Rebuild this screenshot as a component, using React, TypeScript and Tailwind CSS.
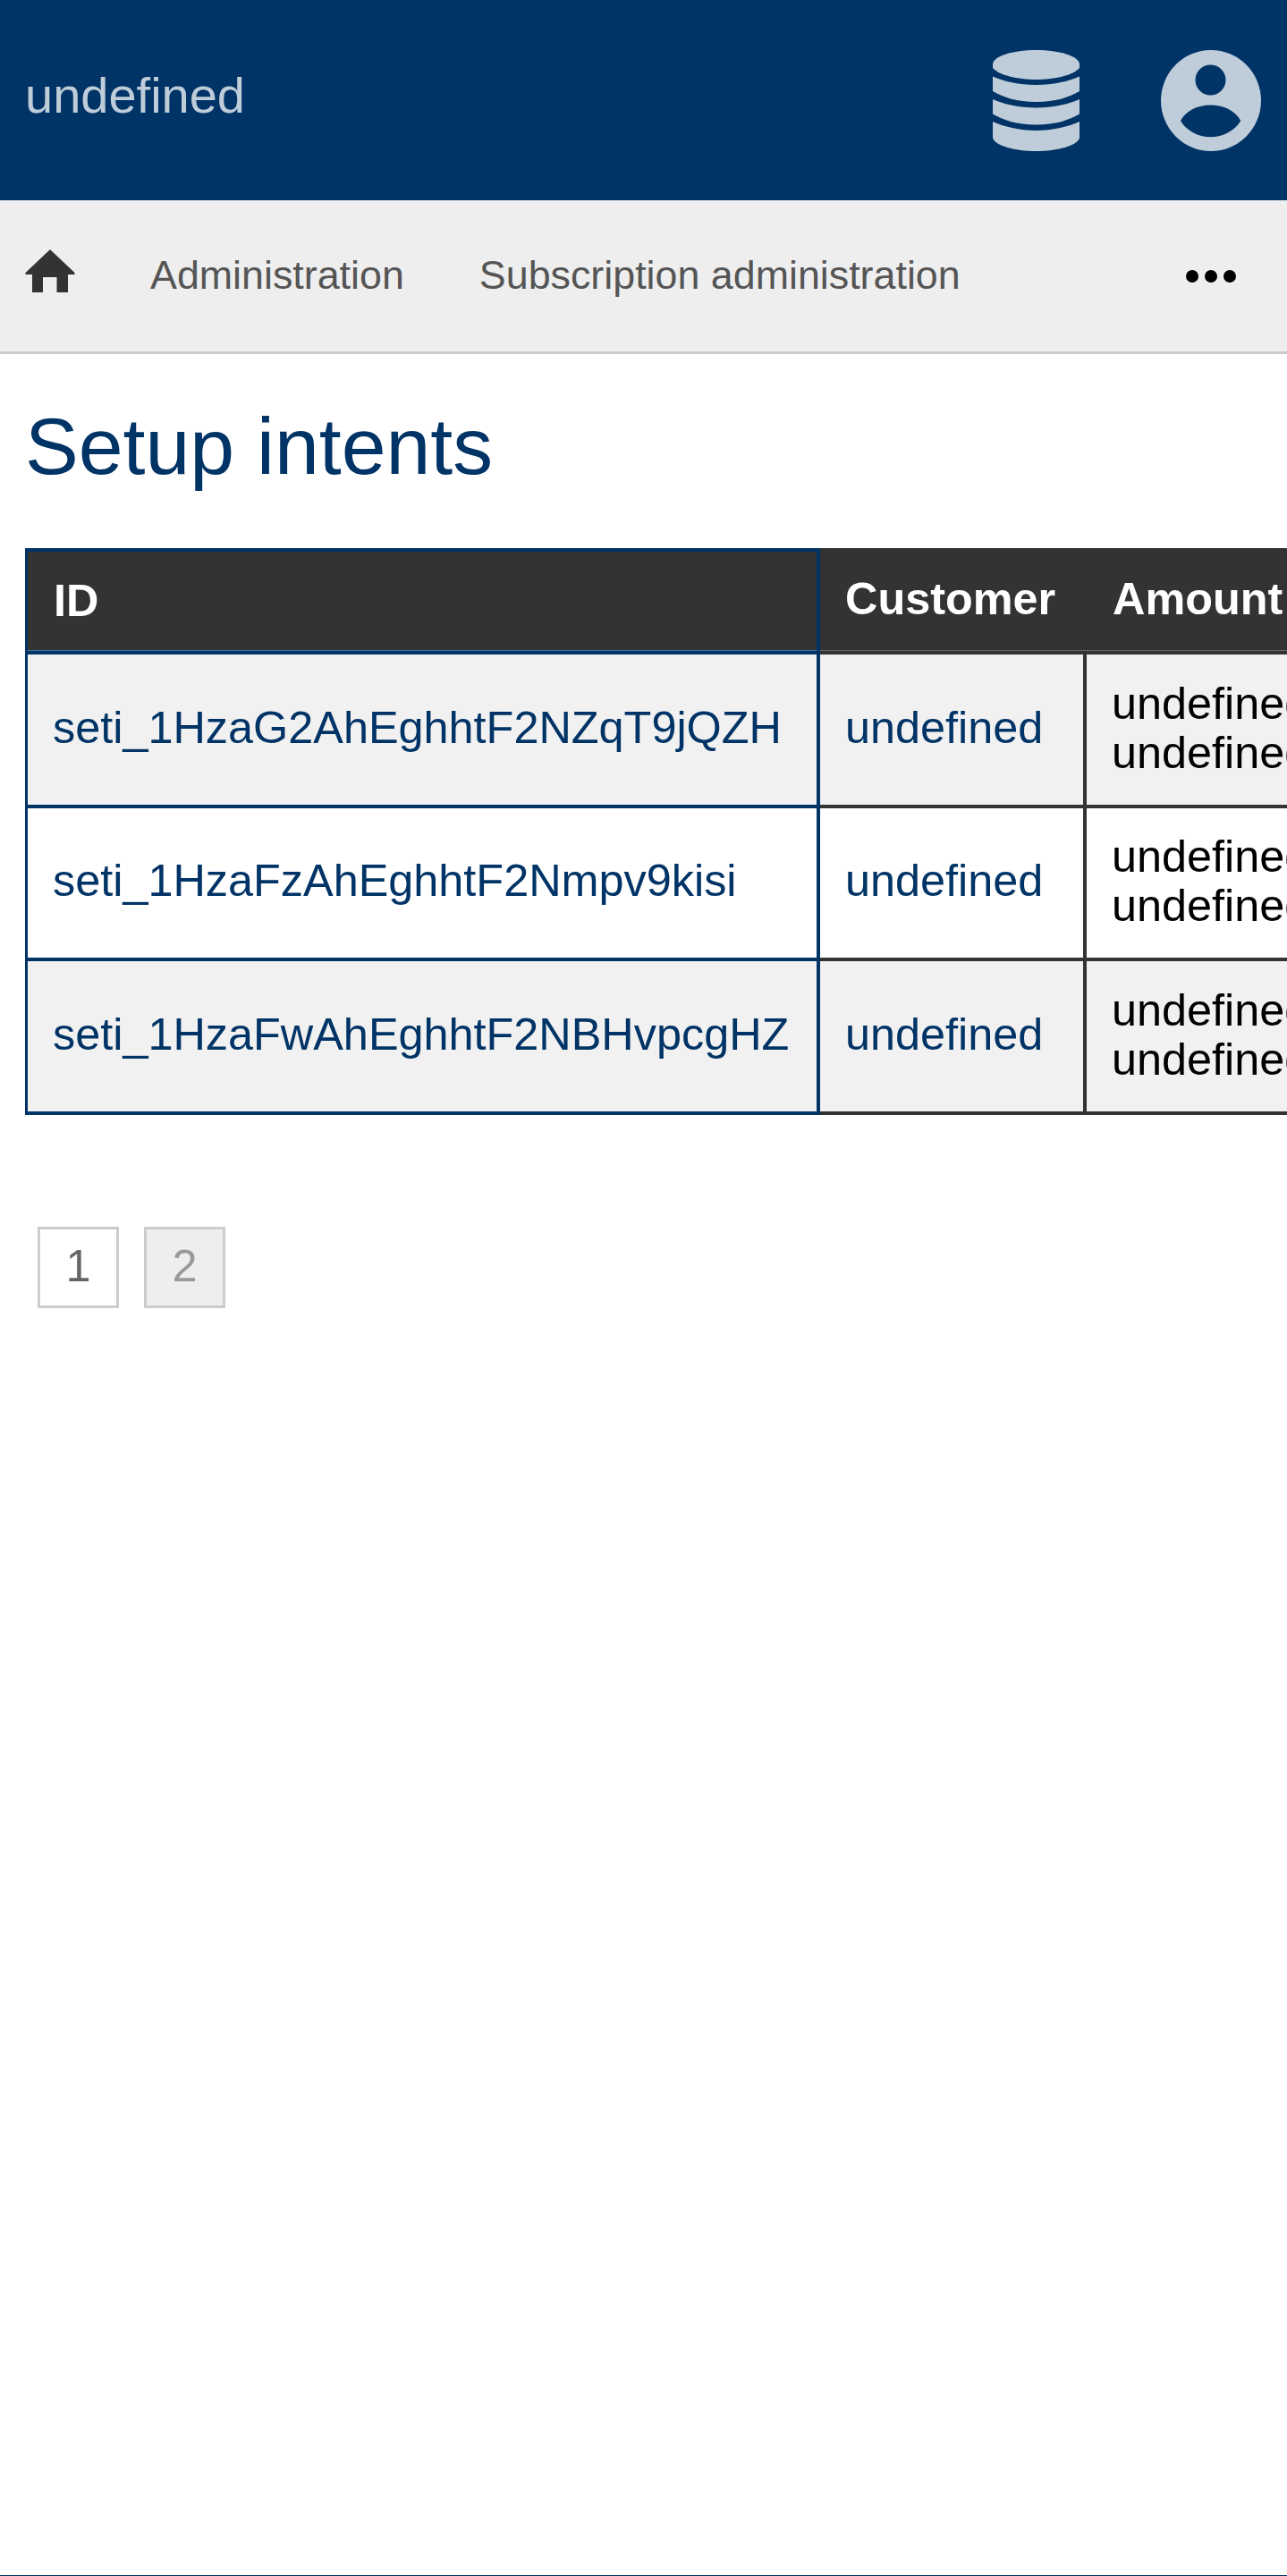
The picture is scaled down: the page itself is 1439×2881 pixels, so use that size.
import React from 'react';

const rows = [
  { id: 'seti_1HzaG2AhEghhtF2NZqT9jQZH', even: true },
  { id: 'seti_1HzaFzAhEghhtF2Nmpv9kisi', even: false },
  { id: 'seti_1HzaFwAhEghhtF2NBHvpcgHZ', even: true },
];

function DatabaseIcon() {
  return (
    <svg width="97" height="113" viewBox="0 0 97 113" className="fill-[#bfccd9]">
      <path d="M0 16C0 7 22 0 48.5 0S97 7 97 16V20C90 28 70 33 48.5 33S7 28 0 20Z" />
      <path d="M0 29.5C12 35 30 39 48.5 39S85 35 97 29.5V46C85 53 70 58 48.5 58S12 53 0 46Z" />
      <path d="M0 55C12 60.5 30 64.5 48.5 64.5S85 60.5 97 55V71.5C85 78.5 70 83.5 48.5 83.5S12 78.5 0 71.5Z" />
      <path d="M0 80C12 85.5 30 90 48.5 90S85 85.5 97 80V98C95 107 72 113 48.5 113S2 107 0 98Z" />
    </svg>
  );
}

function UserIcon() {
  return (
    <svg width="112" height="113" viewBox="0 0 112 113" className="fill-[#bfccd9]">
      <path
        fillRule="evenodd"
        d="M56 0A56 56.5 0 1 1 56 113A56 56.5 0 1 1 56 0ZM55.5 16.5A17 17 0 1 0 55.5 50.5A17 17 0 1 0 55.5 16.5ZM22 79C28 90 42 97.3 55.6 97.3S83 90 89.3 79C83 68 70 61.6 55.6 61.6S28 68 22 79Z"
      />
    </svg>
  );
}

function HomeIcon() {
  return (
    <svg width="56" height="48" viewBox="0 0 56 48" className="fill-[#333] mb-[12px]">
      <path d="M28 0L55.5 26V28H48V48H35.5V31H20V48H8V28H0.5V26Z" />
    </svg>
  );
}

export default function App() {
  return (
    <div className="flex flex-col h-[2881px] w-full overflow-hidden bg-white border-b border-[#003366] font-['Liberation_Sans',Arial,sans-serif]">
      {/* Top bar */}
      <header className="flex items-center justify-between h-[224px] shrink-0 bg-[#003366] pl-[28px] pr-[29px]">
        <span className="text-[56px] leading-none text-[#bfccd9] mb-[10px]">undefined</span>
        <div className="flex items-center gap-[91px]">
          <DatabaseIcon />
          <UserIcon />
        </div>
      </header>

      {/* Navigation */}
      <nav className="flex items-center h-[172px] shrink-0 bg-[#eee] border-b-[3px] border-[#ccc] pl-[28px] pr-[57px] text-[44.8px] text-[#555]">
        <HomeIcon />
        <a className="ml-[84px] mb-[2px]">Administration</a>
        <a className="ml-[84px] mb-[2px]">Subscription administration</a>
        <div className="ml-auto flex items-center gap-[7px]">
          <span className="w-[14px] h-[14px] rounded-full bg-black" />
          <span className="w-[14px] h-[14px] rounded-full bg-black" />
          <span className="w-[14px] h-[14px] rounded-full bg-black" />
        </div>
      </nav>

      <main className="pl-[28px]">
        <h1 className="mt-[53px] text-[89.6px] leading-[100px] text-[#003366]">Setup intents</h1>

        <div className="mt-[64px] w-[1411px] overflow-hidden">
          <table className="border-separate border-spacing-0 table-fixed w-[1520px] text-[50.4px]">
            <colgroup>
              <col className="w-[889px]" />
              <col className="w-[298px]" />
              <col className="w-[333px]" />
            </colgroup>
            <thead>
              <tr className="h-[119px] bg-[#333] text-white font-bold text-left">
                <th className="pl-[29px] pb-[2px] border-t-4 border-r-4 border-b-4 border-l-[3px] border-[#003366] shadow-[inset_0_-1px_0_#4a7299]">ID</th>
                <th className="pl-[28px] pb-[2px] border-b-4 border-[#333] shadow-[inset_0_-1px_0_#666]">Customer</th>
                <th className="pl-[29px] pb-[2px] border-b-4 border-[#333] shadow-[inset_0_-1px_0_#666] whitespace-nowrap">Amount</th>
              </tr>
            </thead>
            <tbody>
              {rows.map((row) => (
                <tr key={row.id} className={row.even ? 'h-[171.5px] bg-[#f1f1f1]' : 'h-[171.5px] bg-white'}>
                  <td className="pl-[28px] pb-[4px] border-l-[3px] border-r-4 border-b-4 border-[#003366] text-[#003366] whitespace-nowrap">
                    {row.id}
                  </td>
                  <td className="pl-[28px] pb-[4px] border-r-4 border-b-4 border-[#333] text-[#003366]">undefined</td>
                  <td className="pl-[28px] pb-[4px] border-b-4 border-[#333] text-black leading-[55px]">
                    undefined
                    <br />
                    undefined
                  </td>
                </tr>
              ))}
            </tbody>
          </table>
        </div>

        {/* Pagination */}
        <div className="mt-[125px] ml-[14px] flex gap-[28px] text-[50.4px]">
          <a className="flex items-center justify-center w-[91px] h-[91px] pb-[3px] border-[3px] border-[#ccc] bg-white text-[#666]">1</a>
          <a className="flex items-center justify-center w-[91px] h-[91px] pb-[3px] border-[3px] border-[#ccc] bg-[#eee] text-[#999]">2</a>
        </div>
      </main>
    </div>
  );
}
